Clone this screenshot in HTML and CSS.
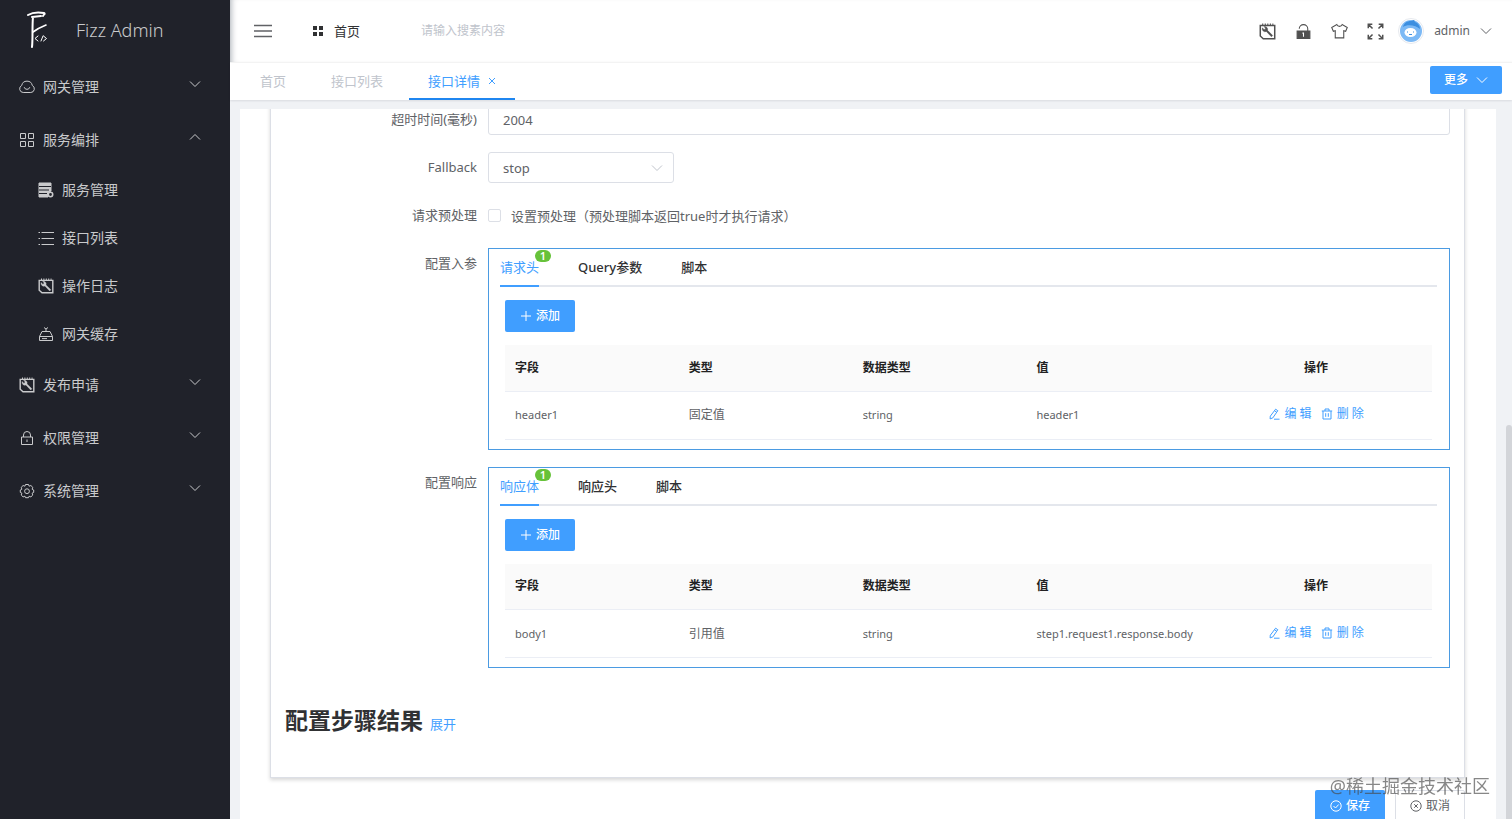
FILE: index.html
```html
<!DOCTYPE html>
<html lang="zh-CN">
<head>
    <meta charset="UTF-8" />
    <meta name="viewport" content="width=device-width, initial-scale=1.0" />
    <title>Fizz Admin</title>
    <link rel="stylesheet" href="styles.css">
</head>
<body>
    <svg class="symbols" aria-hidden="true">
        <symbol id="down" viewBox="0 0 12 12"><path d="M1 3.5l5 5 5-5" /></symbol>
        <symbol id="up" viewBox="0 0 12 12"><path d="M1 8.5l5-5 5 5" /></symbol>
        <symbol id="note" viewBox="0 0 16 16">
            <path stroke-width="1.4" d="M1.2 2.4h13.6v12.4H4l-2.800-2.600z" />
            <path stroke-width="1.6" stroke-dasharray="1 1.4" d="M3 1.2h10.500" />
            <path fill="currentColor" stroke-width=".4" d="M3.200 4.500a2.700 2.700 0 0 0 3.700 3.400L11.700 13l1.200-1.200L8 6.900a2.700 2.700 0 0 0-3.300-3.500L6 4.800 5.800 6l-1.200.2z" />
        </symbol>
        <symbol id="plus" viewBox="0 0 12 12"><path d="M6 1v10M1 6h10" /></symbol>
        <symbol id="edit" viewBox="0 0 12 12"><path d="M7.6 1.2l2.2 1.5-5 7.2-2.7 1 .2-2.7zM6.6 2.8l2 1.4M6 11.2h5.5" /></symbol>
        <symbol id="trash" viewBox="0 0 12 12"><path d="M.8 3h10.4M2 3v8h8V3M4 3V1h4v2M4.7 5.2v3.6M7.3 5.2v3.6" /></symbol>
    </svg>

    <aside class="sidebar">
        <div class="logo">
            <svg class="logo-mark" viewBox="0 0 24 40" aria-hidden="true">
                <path stroke-width="2" d="M2 5C7 2 12 2 18 3c2 1-1 2-1 3" />
                <path stroke-width="2" d="M6 37c1-9 0-20 1-30M6 7l9-1" />
                <path stroke-width="1.6" d="M7 22c4-3 8-5 13-7" />
                <path stroke-width="1" d="M12 26l-3 2.5 3 2.5M17 26l-2 5M17.5 26l3 2.5-3 2.5" />
            </svg>
            <span>Fizz Admin</span>
        </div>
        <nav class="menu">
            <a class="menu-item" href="#gateway">
                <svg class="icon" viewBox="0 0 16 16"><path d="M4.2 13.5a3.7 3.7 0 0 1-1.5-7 5.4 5.4 0 0 1 10.6 0 3.7 3.7 0 0 1-1.5 7zM5.2 8.2a2.9 2.9 0 0 0 5.6 0" /></svg>
                <span>网关管理</span>
                <svg class="arrow"><use href="#down" /></svg>
            </a>
            <a class="menu-item" href="#service">
                <svg class="icon" viewBox="0 0 16 16"><path d="M1.5 1.5h5v5h-5zM9.5 1.5h5v5h-5zM1.5 9.5h5v5h-5zM9.5 9.5h5v5h-5z" /></svg>
                <span>服务编排</span>
                <svg class="arrow"><use href="#up" /></svg>
            </a>
            <div class="submenu">
                <a class="menu-item" href="#service-list">
                    <svg class="icon" viewBox="0 0 16 16">
                        <path class="solid" d="M1 1h12v8l-3 2v4H1z" />
                        <path class="cut" d="M1 4.5h12M1 8h10M1 11.5h8" />
                        <circle class="hub" cx="12.5" cy="12.5" r="2.2" />
                    </svg>
                    <span>服务管理</span>
                </a>
                <a class="menu-item" href="#api-list">
                    <svg class="icon" viewBox="0 0 16 16"><path d="M3.5 2.5H16M3.5 8.5H16M3.5 14.5H16M.5 2.5h1.5M.5 8.5h1.5M.5 14.5h1.5" /></svg>
                    <span>接口列表</span>
                </a>
                <a class="menu-item" href="#logs">
                    <svg class="icon"><use href="#note" /></svg>
                    <span>操作日志</span>
                </a>
                <a class="menu-item" href="#cache">
                    <svg class="icon" viewBox="0 0 16 16"><path d="M4 5.5h8l2.5 5v4h-13v-4zM1.5 10.5h13M8 5V3M6 1.5l2 1.5 2-1.5M4 12.6h5" /></svg>
                    <span>网关缓存</span>
                </a>
            </div>
            <a class="menu-item" href="#release">
                <svg class="icon"><use href="#note" /></svg>
                <span>发布申请</span>
                <svg class="arrow"><use href="#down" /></svg>
            </a>
            <a class="menu-item" href="#auth">
                <svg class="icon" viewBox="0 0 16 16"><path d="M2.5 7h11v7.5h-11zM4.5 7V5a3.5 3.5 0 0 1 7 0v2M8 9.5v2.5" /></svg>
                <span>权限管理</span>
                <svg class="arrow"><use href="#down" /></svg>
            </a>
            <a class="menu-item" href="#system">
                <svg class="icon" viewBox="0 0 16 16"><path d="M6.500 1.500h3l.6 1.700 1.800-.7 1.900 1.900-.7 1.800 1.600.8v2.400l-1.600.8.7 1.800-1.900 1.900-1.800-.7-.6 1.500h-3l-.6-1.500-1.800.7-1.900-1.900.7-1.800-1.600-.8V7l1.600-.8-.7-1.800 1.900-1.900 1.800.7z" /><circle cx="8" cy="8.2" r="2.4" /></svg>
                <span>系统管理</span>
                <svg class="arrow"><use href="#down" /></svg>
            </a>
        </nav>
    </aside>

    <div class="page">
        <header class="topbar">
            <button class="icon-btn collapse" type="button" aria-label="收起菜单">
                <svg viewBox="0 0 18 14"><path stroke-width="1.6" d="M0 1.5h18M0 7h18M0 12.5h18" /></svg>
            </button>
            <a class="home" href="#home">
                <svg viewBox="0 0 10 10"><path d="M0 0h4v4H0zM6 0h4v4H6zM0 6h4v4H0zM6 6h4v4H6z" /></svg>
                <span>首页</span>
            </a>
            <input class="search" type="text" placeholder="请输入搜素内容" aria-label="搜索" />
            <div class="tools">
                <button class="icon-btn" type="button" aria-label="日志">
                    <svg class="tool"><use href="#note" /></svg>
                </button>
                <button class="icon-btn" type="button" aria-label="锁屏">
                    <svg class="tool" viewBox="0 0 16 16"><path class="solid" d="M2 7.5h12v7H2z" /><path d="M4 5.500a4 4 0 0 1 8 0v2" /><path class="keyhole" d="M8 9v4M7 9.500h1" /></svg>
                </button>
                <button class="icon-btn" type="button" aria-label="主题">
                    <svg class="tool" viewBox="0 0 16 16"><path d="M5.5 1.5a2.700 2.700 0 0 0 5 0l4.800 2.700-1.500 3.600-1.800-.6v6.800H4V7.200l-1.800.6L.7 4.200z" /></svg>
                </button>
                <button class="icon-btn" type="button" aria-label="全屏">
                    <svg class="tool" viewBox="0 0 16 16"><path stroke-width="1.4" d="M1.200 5V1.200H5M1.200 1.200l4 4M11 1.200h3.800V5M14.800 1.200l-4 4M1.200 11v3.800H5M1.200 14.800l4-4M11 14.800h3.800V11M14.800 14.800l-4-4" /></svg>
                </button>
                <button class="user" type="button">
                    <svg class="avatar" viewBox="0 0 26 26">
                        <circle class="ring" cx="13" cy="13" r="12.5" />
                        <circle class="face" cx="13" cy="13" r="11" />
                        <path class="hair" d="M5 9c1-4 4-6 8-6l3-1 1 2c3 1 5 4 5 7-4-4-13-5-17-2z" />
                        <ellipse class="mouth" cx="12.5" cy="14.5" rx="6" ry="4.500" />
                        <path class="smile" d="M9 14h1M15 14h1M11 16.500h3" />
                    </svg>
                    <span>admin</span>
                    <svg class="arrow"><use href="#down" /></svg>
                </button>
            </div>
        </header>

        <div class="tabbar">
            <nav class="page-tabs">
                <a href="#home">首页</a>
                <a href="#api-list">接口列表</a>
                <a class="active" href="#api-detail">接口详情
                    <svg viewBox="0 0 8 8"><path d="M1 1l6 6M7 1L1 7" /></svg>
                </a>
            </nav>
            <button class="btn more" type="button">更多 <svg><use href="#down" /></svg></button>
        </div>

        <main class="content">
            <div class="panel">
                <form class="card">
                    <div class="row">
                        <label for="timeout">超时时间(毫秒)</label>
                        <input class="field" id="timeout" type="text" value="2004" />
                    </div>
                    <div class="row">
                        <label for="fallback">Fallback</label>
                        <div class="select">
                            <select class="field" id="fallback">
                                <option>stop</option>
                                <option>continue</option>
                            </select>
                            <svg><use href="#down" /></svg>
                        </div>
                    </div>
                    <div class="row">
                        <span class="label">请求预处理</span>
                        <label class="check"><input type="checkbox" />设置预处理（预处理脚本返回true时才执行请求）</label>
                    </div>
                    <div class="row">
                        <span class="label">配置入参</span>
                        <section class="box">
                            <div class="tabs">
                                <button class="active" type="button">请求头<span class="badge">1</span></button>
                                <button type="button">Query参数</button>
                                <button type="button">脚本</button>
                            </div>
                            <div class="tab-body">
                                <button class="btn" type="button"><svg><use href="#plus" /></svg>添加</button>
                                <table>
                                    <thead>
                                        <tr><th>字段</th><th>类型</th><th>数据类型</th><th>值</th><th class="ops">操作</th></tr>
                                    </thead>
                                    <tbody>
                                        <tr>
                                            <td class="code">header1</td><td>固定值</td><td class="code">string</td><td class="code">header1</td>
                                            <td class="ops">
                                                <button class="text-btn" type="button"><svg><use href="#edit" /></svg>编 辑</button>
                                                <button class="text-btn" type="button"><svg><use href="#trash" /></svg>删 除</button>
                                            </td>
                                        </tr>
                                    </tbody>
                                </table>
                            </div>
                        </section>
                    </div>
                    <div class="row">
                        <span class="label">配置响应</span>
                        <section class="box">
                            <div class="tabs">
                                <button class="active" type="button">响应体<span class="badge">1</span></button>
                                <button type="button">响应头</button>
                                <button type="button">脚本</button>
                            </div>
                            <div class="tab-body">
                                <button class="btn" type="button"><svg><use href="#plus" /></svg>添加</button>
                                <table>
                                    <thead>
                                        <tr><th>字段</th><th>类型</th><th>数据类型</th><th>值</th><th class="ops">操作</th></tr>
                                    </thead>
                                    <tbody>
                                        <tr>
                                            <td class="code">body1</td><td>引用值</td><td class="code">string</td><td class="code">step1.request1.response.body</td>
                                            <td class="ops">
                                                <button class="text-btn" type="button"><svg><use href="#edit" /></svg>编 辑</button>
                                                <button class="text-btn" type="button"><svg><use href="#trash" /></svg>删 除</button>
                                            </td>
                                        </tr>
                                    </tbody>
                                </table>
                            </div>
                        </section>
                    </div>
                    <div class="result">
                        <h2>配置步骤结果</h2>
                        <a href="#result">展开</a>
                    </div>
                </form>
                <div class="actions">
                    <button class="btn" type="button">
                        <svg viewBox="0 0 12 12"><circle cx="6" cy="6" r="5.2" /><path d="M3.5 6l2 2 3.2-3.5" /></svg>保存
                    </button>
                    <button class="btn plain" type="button">
                        <svg viewBox="0 0 12 12"><circle cx="6" cy="6" r="5.2" /><path d="M4.2 4.2l3.6 3.6M7.8 4.2L4.2 7.8" /></svg>取消
                    </button>
                </div>
            </div>
            <div class="scroll-thumb"></div>
        </main>
    </div>
    <div class="watermark">@稀土掘金技术社区</div>
</body>
</html>
```
FILE: styles.css
```css
* {
    box-sizing: border-box;
}

body {
    display: flex;
    margin: 0;
    height: 100vh;
    overflow: hidden;
    background-color: #f0f2f5;
    color: #606266;
    font: 13px/20px "Noto Sans", "Noto Sans CJK SC", sans-serif;
}

a {
    color: inherit;
    text-decoration: none;
}

button, input, select {
    margin: 0;
    padding: 0;
    border: 0;
    background: none;
    color: inherit;
    font: inherit;
}

svg {
    flex: none;
    width: 12px;
    height: 12px;
    fill: none;
    stroke: currentColor;
}

.symbols {
    position: absolute;
    width: 0;
    height: 0;
}

.solid {
    fill: currentColor;
}

/* 侧边栏 */
.sidebar {
    flex: none;
    width: 230px;
    background-color: #20222a;
    color: #c9cacc;
    font-size: 14px;
}

.logo {
    display: flex;
    align-items: center;
    gap: 26px;
    height: 60px;
    padding-left: 26px;
    font-size: 18px;
    font-weight: 300;
}

.logo-mark {
    width: 24px;
    height: 40px;
    stroke: #fff;
    stroke-linecap: round;
}

.menu-item {
    display: flex;
    align-items: center;
    gap: 8px;
    height: 53px;
    padding: 0 29px 0 19px;
}

.submenu .menu-item {
    height: 48px;
    padding-left: 38px;
}

.menu-item .icon {
    width: 16px;
    height: 16px;
}

.menu-item .arrow {
    margin: 0 0 6px auto;
}

.cut {
    stroke: #20222a;
}

.hub {
    fill: #20222a;
    stroke-width: 1.6;
}

/* 顶部 */
.page {
    display: flex;
    flex: 1;
    flex-direction: column;
    min-width: 0;
}

.topbar {
    display: flex;
    flex: none;
    align-items: center;
    height: 62px;
    padding: 0 20px 0 24px;
    background-color: #fff;
    box-shadow: inset 6px 0 6px -5px rgba(0, 21, 41, 0.35);
}

.icon-btn {
    display: flex;
}

.collapse svg {
    width: 18px;
    height: 14px;
}

.home {
    display: flex;
    align-items: center;
    gap: 11px;
    margin-left: 41px;
    color: #303133;
}

.home svg {
    width: 10px;
    height: 10px;
    fill: currentColor;
    stroke: none;
}

.search {
    margin-left: 61px;
    width: 180px;
    font-size: 12px;
}

.search::placeholder {
    color: #c0c4cc;
}

.tools {
    display: flex;
    align-items: center;
    gap: 19px;
    margin-left: auto;
    color: #505050;
}

.tool {
    width: 17px;
    height: 17px;
}

.keyhole {
    stroke: #fff;
}

.user {
    display: flex;
    align-items: center;
    gap: 10px;
    margin-left: -5px;
    color: #606266;
    font-size: 12px;
}

.avatar {
    width: 26px;
    height: 26px;
    stroke: none;
}

.ring {
    fill: #fff;
    stroke: #e6e9ee;
}

.face {
    fill: #7cb9f5;
}

.hair {
    fill: #3c8fe0;
}

.mouth {
    fill: #fff;
}

.smile {
    stroke: #3c8fe0;
}

.tabbar {
    display: flex;
    flex: none;
    align-items: center;
    justify-content: space-between;
    height: 38px;
    padding: 0 10px 0 11px;
    border-top: 1px solid #f3f3f3;
    background-color: #fff;
    box-shadow: 0 1px 2px rgba(0, 21, 41, 0.1);
}

.page-tabs {
    display: flex;
    gap: 7px;
    color: #c0c4cc;
}

.page-tabs a {
    display: flex;
    align-items: center;
    gap: 8px;
    height: 37px;
    padding: 0 19px;
    border-bottom: 2px solid transparent;
}

.page-tabs .active {
    border-color: #1f86f0;
    color: #409eff;
}

.page-tabs svg {
    width: 8px;
    height: 8px;
}

.btn {
    display: flex;
    align-items: center;
    justify-content: center;
    gap: 4px;
    width: 70px;
    height: 32px;
    border-radius: 2px;
    background-color: #409eff;
    color: #fff;
    font-size: 12px;
    font-weight: 500;
}

.more {
    gap: 8px;
    margin-bottom: 3px;
    width: 72px;
    height: 28px;
}

/* 内容区 */
.content {
    display: flex;
    flex: 1;
    align-items: flex-start;
    margin-top: 9px;
    padding-left: 10px;
    min-height: 0;
    overflow: hidden;
}

.panel {
    flex: 1;
    margin-right: 10px;
    min-width: 0;
    padding: 0 31px 20px 30px;
    background-color: #fff;
}

/* 页面已滚动，第一行上半部分被遮住 */
.card {
    display: flex;
    flex-direction: column;
    gap: 17px;
    margin-top: -21px;
    padding: 15px 14px 41px;
    border: 1px solid #dcdfe6;
    box-shadow: 0 2px 4px rgba(0, 0, 0, 0.16);
}

.row {
    display: flex;
    gap: 11px;
}

.row > label:first-child, .label {
    flex: none;
    width: 192px;
    line-height: 31px;
    text-align: right;
}

.field {
    width: 100%;
    height: 31px;
    padding: 0 14px;
    border: 1px solid #dcdfe6;
    border-radius: 3px;
    background-color: #fff;
}

.select {
    position: relative;
    width: 186px;
}

.select select {
    appearance: none;
}

.select svg {
    position: absolute;
    top: 10px;
    right: 11px;
    color: #c0c4cc;
}

.check {
    display: flex;
    align-items: center;
    gap: 10px;
    height: 31px;
}

.check input {
    appearance: none;
    width: 13px;
    height: 13px;
    border: 1px solid #dcdfe6;
    border-radius: 2px;
}

.box {
    flex: 1;
    min-width: 0;
    border: 1px solid #4b9be2;
    padding: 0 12px 9px 11px;
}

.tabs {
    display: flex;
    gap: 39px;
    height: 38px;
    border-bottom: 2px solid #e4e7ed;
    color: #303133;
}

.tabs button {
    position: relative;
    height: 38px;
    border-bottom: 2px solid transparent;
    font-weight: 500;
}

.tabs .active {
    border-color: #409eff;
    color: #409eff;
    font-weight: 400;
}

.badge {
    position: absolute;
    top: 1px;
    right: -12px;
    width: 16px;
    border-radius: 6px;
    background-color: #67c23a;
    color: #fff;
    font-size: 11px;
    font-weight: 600;
    line-height: 12px;
}

.tab-body {
    padding: 13px 5px 0;
}

table {
    margin-top: 13px;
    width: 100%;
    border-collapse: collapse;
    table-layout: fixed;
    font-size: 12px;
    text-align: left;
}

th {
    height: 46px;
    padding: 0 10px;
    border-bottom: 1px solid #ebeef5;
    background-color: #fafafa;
    color: #222;
    font-weight: 600;
}

td {
    height: 48px;
    padding: 0 10px;
    border-bottom: 1px solid #ebeef5;
    white-space: nowrap;
}

.code {
    font-size: 11px;
}

.ops {
    width: 25%;
    text-align: center;
}

.text-btn {
    display: inline-flex;
    align-items: center;
    gap: 4px;
    margin: 0 3px;
    color: #409eff;
}

.result {
    display: flex;
    align-items: baseline;
    gap: 7px;
    margin-top: 19px;
}

.result h2 {
    margin: 0;
    color: #303133;
    font-size: 23px;
    line-height: 32px;
}

.result a {
    color: #409eff;
}

.actions {
    display: flex;
    justify-content: flex-end;
    gap: 10px;
    margin-top: 12px;
}

.plain {
    border: 1px solid #dcdfe6;
    background-color: #fff;
    color: #606266;
    font-weight: 400;
}

.scroll-thumb {
    align-self: flex-end;
    width: 6px;
    height: 394px;
    border-radius: 3px 3px 0 0;
    background-color: #d3d5d9;
}

.watermark {
    position: fixed;
    right: 22px;
    bottom: 21px;
    color: rgba(70, 70, 70, 0.65);
    font-size: 18px;
    line-height: 24px;
}
```
